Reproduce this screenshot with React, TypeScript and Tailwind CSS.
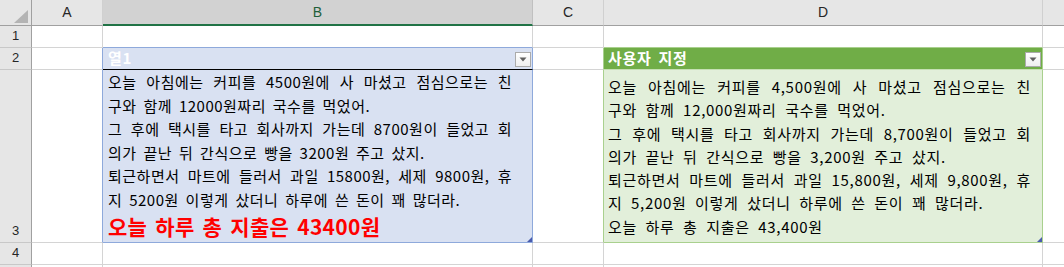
import React from "react";

const kr = "font-['Malgun_Gothic','Noto_Sans_CJK_KR',sans-serif]";

function FilterButton() {
  return (
    <div className="absolute right-[1px] top-[4px] flex h-[15px] w-[16px] items-center justify-center border border-[#ababab] bg-gradient-to-b from-white to-[#efefef]">
      <svg width="8" height="5" viewBox="0 0 8 5">
        <path d="M0.5 0.5h7L4 4.5z" fill="#5f5f5f" />
      </svg>
    </div>
  );
}

function ResizeHandle() {
  return (
    <svg className="absolute bottom-0 right-0" width="5" height="5" viewBox="0 0 5 5">
      <path d="M5 0V5H0z" fill="#4a5cae" />
    </svg>
  );
}

// one wrapped line of a cell; "fill" lines are stretched to the cell width like Excel's justify
function Line({ children, fill }: { children: React.ReactNode; fill?: boolean }) {
  return (
    <div className={fill ? "whitespace-nowrap text-justify [text-align-last:justify]" : "whitespace-nowrap"}>
      {children}
    </div>
  );
}

export default function App() {
  const colHead = "flex items-center justify-center border-r border-b border-r-[#d0d0d0] border-b-[#a0a0a0] bg-[#e6e6e6] font-['Liberation_Sans',sans-serif] text-[14px] text-[#262626]";
  const rowHead = "flex items-end justify-center border-r border-b border-r-[#a0a0a0] border-b-[#c8c8c8] bg-[#e6e6e6] pb-[2px] font-['Liberation_Sans',sans-serif] text-[13px] text-[#262626]";
  const cell = "border-r border-b border-[#d4d4d4] bg-white";

  return (
    <div className="h-[267px] w-[1064px] overflow-hidden bg-white">
      <div className="grid grid-cols-[32px_71px_430px_71px_439px_1fr] grid-rows-[26px_22px_22px_173px_22px_22px]">
        {/* column headers */}
        <div className="relative border-r border-b border-r-[#a0a0a0] border-b-[#a0a0a0] bg-[#e6e6e6]">
          <svg className="absolute left-[14px] top-[10px]" width="14" height="13" viewBox="0 0 14 13">
            <path d="M14 0V13H0z" fill="#b4b4b4" />
          </svg>
        </div>
        <div className={colHead}>A</div>
        <div className="flex items-center justify-center border-r border-b-2 border-r-[#c0c0c0] border-b-[#217346] bg-[#d2d2d2] font-['Liberation_Sans',sans-serif] text-[14px] text-[#1f5f3a]">
          B
        </div>
        <div className={colHead}>C</div>
        <div className={colHead}>D</div>
        <div className="border-b border-b-[#a0a0a0] bg-[#e6e6e6]" />

        {/* row 1 */}
        <div className={rowHead}>1</div>
        <div className={cell} />
        <div className="border-r border-b border-r-[#d4d4d4] border-b-[#8ea9db] bg-white" />
        <div className={cell} />
        <div className="border-r border-b border-r-[#d4d4d4] border-b-[#a9d08e] bg-white" />
        <div className="border-b border-[#d4d4d4]" />

        {/* row 2: table headers */}
        <div className={rowHead}>2</div>
        <div className="border-r border-b border-r-[#8ea9db] border-b-[#d4d4d4] bg-white" />
        <div className={`relative flex items-center border-r border-b border-r-[#8ea9db] border-b-black bg-[#d9e1f2] pl-[5px] text-[15px] font-bold tracking-[0.7px] text-white ${kr}`}>
          열1
          <FilterButton />
        </div>
        <div className="border-r border-b border-r-[#a9d08e] border-b-[#d4d4d4] bg-white" />
        <div className={`relative flex items-center border-r border-b border-r-[#a9d08e] border-b-[#c6e0b4] bg-[#70ad47] pl-[4px] text-[15px] font-bold tracking-[0.7px] text-white [word-spacing:3px] ${kr}`}>
          사용자 지정
          <FilterButton />
        </div>
        <div className="border-b border-[#d4d4d4]" />

        {/* row 3: table data */}
        <div className={rowHead}>3</div>
        <div className="border-r border-b border-r-[#8ea9db] border-b-[#d4d4d4] bg-white" />
        <div className={`relative flex flex-col justify-start border-r border-b border-[#8ea9db] bg-[#d9e1f2] pl-[5px] text-[15px] leading-[23.6px] tracking-[0.5px] text-black [word-spacing:3px] ${kr}`}>
          <div className="w-[404px]">
            <Line fill>오늘 아침에는 커피를 4500원에 사 마셨고 점심으로는 친</Line>
            <Line>구와 함께 12000원짜리 국수를 먹었어.</Line>
            <Line fill>그 후에 택시를 타고 회사까지 가는데 8700원이 들었고 회</Line>
            <Line>의가 끝난 뒤 간식으로 빵을 3200원 주고 샀지.</Line>
            <Line fill>퇴근하면서 마트에 들러서 과일 15800원, 세제 9800원, 휴</Line>
            <Line>지 5200원 이렇게 샀더니 하루에 쓴 돈이 꽤 많더라.</Line>
            <div className="whitespace-nowrap pt-[1px] text-[21px] font-bold leading-[26px] tracking-[0.3px] text-[#ff0000]">
              오늘 하루 총 지출은 43400원
            </div>
          </div>
          <ResizeHandle />
        </div>
        <div className="border-r border-b border-r-[#a9d08e] border-b-[#d4d4d4] bg-white" />
        <div className={`relative flex flex-col justify-end border-r border-b border-[#a9d08e] bg-[#e2efda] pb-[4px] pl-[4px] text-[15px] leading-[23.3px] tracking-[0.7px] text-black [word-spacing:4.5px] ${kr}`}>
          <div className="w-[423px]">
            <Line fill>오늘 아침에는 커피를 4,500원에 사 마셨고 점심으로는 친</Line>
            <Line>구와 함께 12,000원짜리 국수를 먹었어.</Line>
            <Line fill>그 후에 택시를 타고 회사까지 가는데 8,700원이 들었고 회</Line>
            <Line>의가 끝난 뒤 간식으로 빵을 3,200원 주고 샀지.</Line>
            <Line fill>퇴근하면서 마트에 들러서 과일 15,800원, 세제 9,800원, 휴</Line>
            <Line>지 5,200원 이렇게 샀더니 하루에 쓴 돈이 꽤 많더라.</Line>
            <Line>오늘 하루 총 지출은 43,400원</Line>
          </div>
          <ResizeHandle />
        </div>
        <div className="border-b border-[#d4d4d4]" />

        {/* row 4 */}
        <div className={rowHead}>4</div>
        <div className={cell} />
        <div className={cell} />
        <div className={cell} />
        <div className={cell} />
        <div className="border-b border-[#d4d4d4]" />

        {/* row 5, only its top edge shows */}
        <div className="border-r border-r-[#a0a0a0] bg-[#e6e6e6]" />
        <div className={cell} />
        <div className={cell} />
        <div className={cell} />
        <div className={cell} />
        <div className="border-b border-[#d4d4d4]" />
      </div>
    </div>
  );
}
